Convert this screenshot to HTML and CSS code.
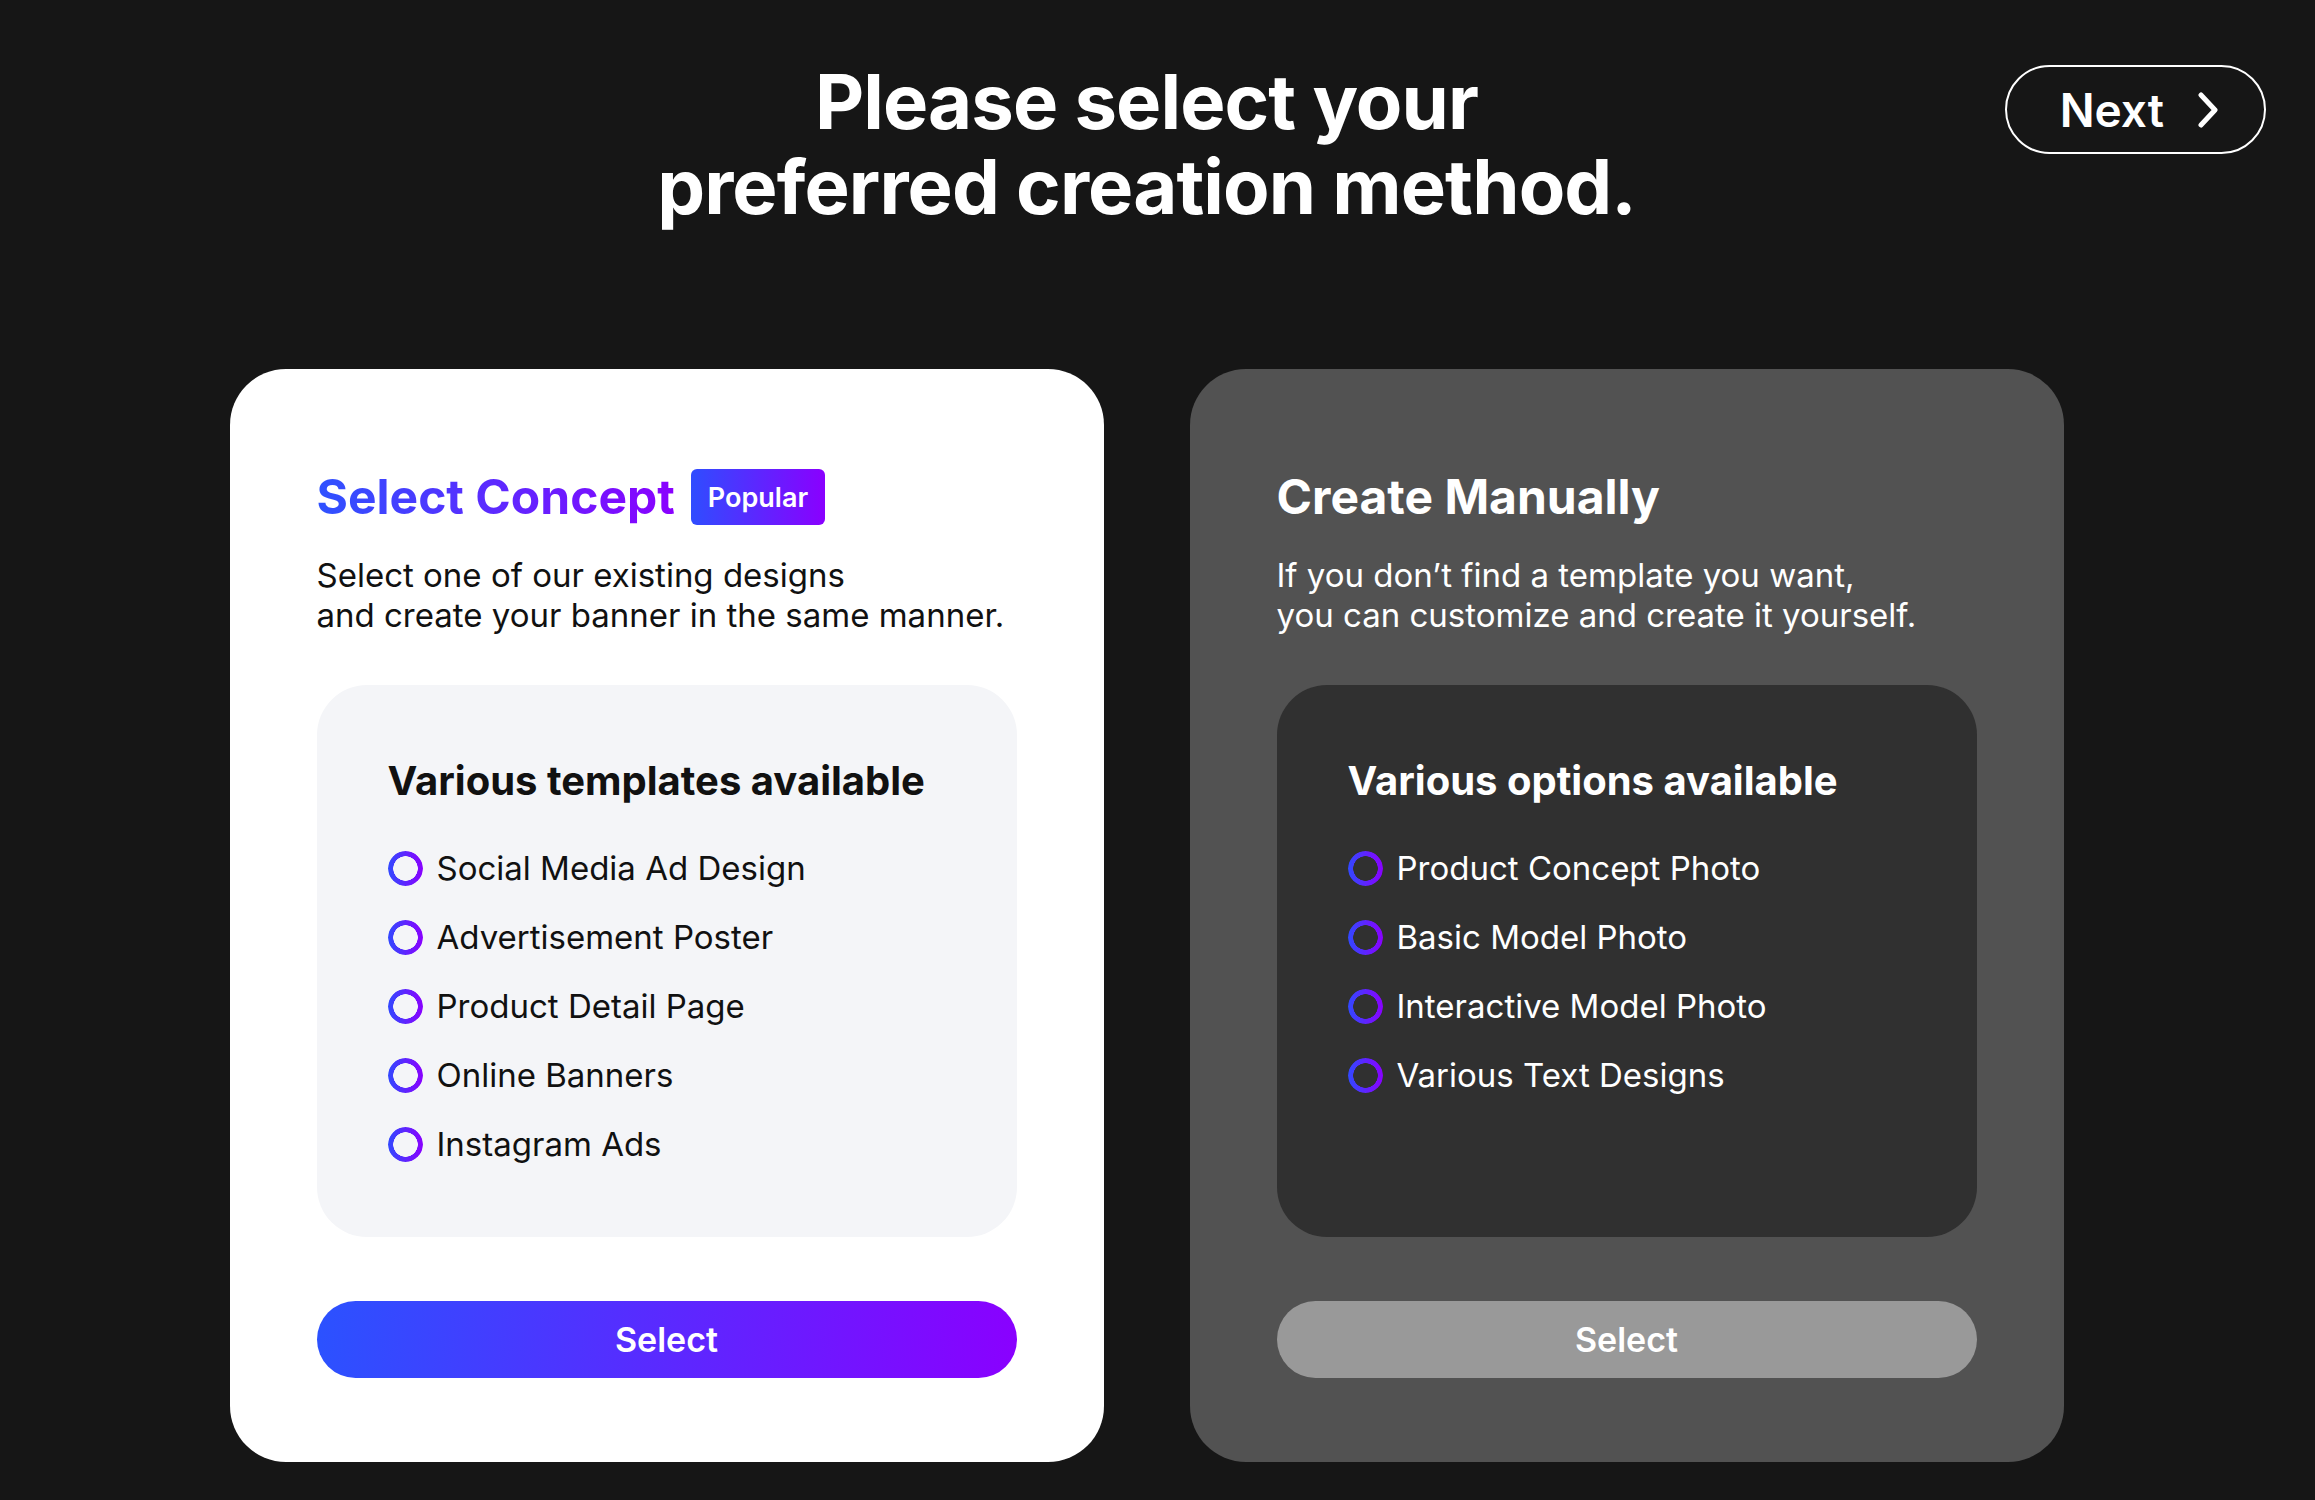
FILE: index.html
```html
<!DOCTYPE html>
<html lang="en">
<head>
  <meta charset="UTF-8">
  <meta name="viewport" content="width=device-width, initial-scale=1">
  <title>Select creation method</title>
  <link rel="stylesheet" href="styles.css">
</head>
<body>
  <div class="page">
    <header class="top">
      <div></div>
      <h1 class="title">Please select your<br>preferred creation method.</h1>
      <button class="next">
        Next
        <svg class="chev" width="22" height="36" viewBox="0 0 22 36"><polyline points="4,3 18,18 4,33" fill="none" stroke="#fff" stroke-width="5" stroke-linecap="round" stroke-linejoin="round"/></svg>
      </button>
    </header>

    <main class="cards">
      <section class="card card-concept">
        <div class="card-head">
          <h2>Select Concept</h2>
          <span class="badge">Popular</span>
        </div>
        <p class="card-desc">Select one of our existing designs<br>and create your banner in the same manner.</p>
        <div class="card-box">
          <h3>Various templates available</h3>
          <ul class="options">
            <li><span class="ring"></span>Social Media Ad Design</li>
            <li><span class="ring"></span>Advertisement Poster</li>
            <li><span class="ring"></span>Product Detail Page</li>
            <li><span class="ring"></span>Online Banners</li>
            <li><span class="ring"></span>Instagram Ads</li>
          </ul>
        </div>
        <button class="select">Select</button>
      </section>

      <section class="card card-manual">
        <div class="card-head">
          <h2>Create Manually</h2>
        </div>
        <p class="card-desc">If you don’t find a template you want,<br>you can customize and create it yourself.</p>
        <div class="card-box">
          <h3>Various options available</h3>
          <ul class="options">
            <li><span class="ring"></span>Product Concept Photo</li>
            <li><span class="ring"></span>Basic Model Photo</li>
            <li><span class="ring"></span>Interactive Model Photo</li>
            <li><span class="ring"></span>Various Text Designs</li>
          </ul>
        </div>
        <button class="select">Select</button>
      </section>
    </main>
  </div>
</body>
</html>
```

FILE: styles.css
```css
* {
  box-sizing: border-box;
}
body {
  margin: 0;
  background: #161616;
  font-family: Inter, "Noto Sans", Arial, sans-serif;
  color: #111;
}
.page {
  margin-right: 22px;
  padding-bottom: 38px;
}
.top {
  display: grid;
  grid-template-columns: 1fr auto 1fr;
}
.title {
  margin: 59px 0 0;
  color: #fff;
  font-size: 76px;
  line-height: 85px;
  font-weight: 700;
  text-align: center;
  letter-spacing: -0.9px;
}
.next {
  justify-self: end;
  align-self: start;
  margin: 65px 27px 0 0;
  height: 89px;
  padding: 0 45px 0 53px;
  display: flex;
  align-items: center;
  gap: 33px;
  background: transparent;
  color: #fff;
  border: 2px solid #fff;
  border-radius: 45px;
  font-family: inherit;
  font-size: 46px;
  font-weight: 600;
  cursor: pointer;
}
.cards {
  display: flex;
  justify-content: center;
  gap: 86px;
  margin-top: 140px;
}
.card {
  width: 874px;
  border-radius: 56px;
  padding: 100px 87px 84px;
  background: #fff;
}
.card-manual {
  background: #525252;
  color: #fff;
}
.card-head {
  display: flex;
  align-items: center;
  gap: 16px;
  height: 56px;
}
.card-head h2 {
  margin: 0;
  font-size: 48px;
  line-height: 56px;
  font-weight: 700;
}
.card-concept h2 {
  background: linear-gradient(90deg, #2f52ff, #8a00ff);
  -webkit-background-clip: text;
  background-clip: text;
  color: transparent;
}
.badge {
  height: 56px;
  padding: 0 17px;
  display: flex;
  align-items: center;
  border-radius: 6px;
  background: linear-gradient(90deg, #2f4dff, #8a00ff);
  color: #fff;
  font-size: 27px;
  font-weight: 600;
}
.card-desc {
  margin: 30px 0 50px;
  font-size: 33px;
  line-height: 40px;
}
.card-box {
  height: 552px;
  border-radius: 50px;
  padding: 72px 71px 0;
  background: #f4f5f8;
}
.card-manual .card-box {
  background: #303030;
}
.card-box h3 {
  margin: 0;
  font-size: 40px;
  line-height: 48px;
  font-weight: 700;
}
.options {
  list-style: none;
  margin: 40px 0 0;
  padding: 0;
  display: flex;
  flex-direction: column;
  gap: 23px;
}
.options li {
  display: flex;
  align-items: center;
  gap: 14px;
  font-size: 33px;
  line-height: 46px;
}
.ring {
  width: 35px;
  height: 35px;
  border-radius: 50%;
  background: linear-gradient(90deg, #3149ff, #8a00ff);
  -webkit-mask: radial-gradient(circle, transparent 12px, #000 12.5px);
  mask: radial-gradient(circle, transparent 12px, #000 12.5px);
}
.select {
  display: block;
  width: 100%;
  height: 77px;
  margin-top: 64px;
  border: none;
  border-radius: 39px;
  background: linear-gradient(95deg, #2b52ff, #8a00ff);
  color: #fff;
  font-family: inherit;
  font-size: 34px;
  font-weight: 600;
  cursor: pointer;
}
.card-manual .select {
  background: #999;
}
```
